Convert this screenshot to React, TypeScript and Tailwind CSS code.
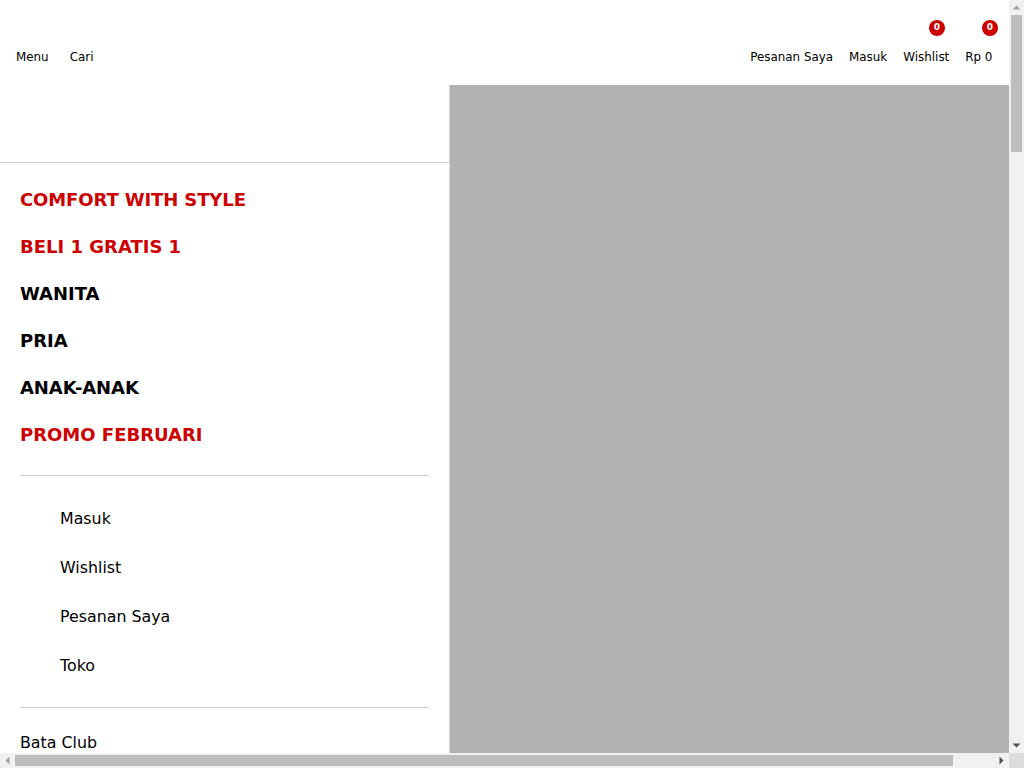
export default function App() {
  const font = { fontFamily: '"DejaVu Sans", sans-serif' };
  return (
    <div className="w-[1024px] h-[768px] overflow-hidden flex flex-col bg-white text-black" style={font}>
      <div className="flex h-[753px]">
        <div className="w-[1009px] flex flex-col overflow-hidden">
          <header className="h-[85px] shrink-0 flex flex-col">
            <div className="h-[20px]" />
            <div className="h-[16px] flex justify-end">
              <span className="mr-[37px] w-[16px] h-[16px] rounded-full bg-[#cc0000] text-white text-[9px] font-bold flex items-center justify-center">0</span>
              <span className="mr-[11px] w-[16px] h-[16px] rounded-full bg-[#cc0000] text-white text-[9px] font-bold flex items-center justify-center">0</span>
            </div>
            <div className="flex justify-between text-[11.9px] leading-[14px] mt-[14px] pl-[16px] pr-[16.6px]">
              <div className="flex gap-[21px]"><span>Menu</span><span>Cari</span></div>
              <div className="flex gap-[16px]"><span>Pesanan Saya</span><span>Masuk</span><span>Wishlist</span><span>Rp 0</span></div>
            </div>
          </header>
          <div className="flex flex-1 min-h-0">
            <nav className="w-[450px] shrink-0 bg-white overflow-hidden border-r border-[#d8d8d8]">
              <div className="h-[78px] border-b border-[#cccccc]" />
              <div className="px-[20px]">
                <ul className="pt-[13px] pb-[17px] text-[18px] leading-[47px] font-bold">
                  <li className="text-[#cc0000] tracking-[-0.11px]">COMFORT WITH STYLE</li>
                  <li className="text-[#cc0000]">BELI 1 GRATIS 1</li>
                  <li>WANITA</li>
                  <li>PRIA</li>
                  <li className="tracking-[-0.1px]">ANAK-ANAK</li>
                  <li className="text-[#cc0000]">PROMO FEBRUARI</li>
                </ul>
                <ul className="border-t border-b border-[#cccccc] pl-[40px] pt-[18px] pb-[17px] text-[15.84px] leading-[49px]">
                  <li>Masuk</li>
                  <li>Wishlist</li>
                  <li>Pesanan Saya</li>
                  <li>Toko</li>
                </ul>
                <div className="text-[15.84px] leading-[20px] mt-[25px]">Bata Club</div>
              </div>
            </nav>
            <div className="flex-1 bg-[#b2b2b2]" />
          </div>
        </div>
        <div className="w-[15px] bg-[#f1f1f1] flex flex-col items-center">
          <div className="h-[15px] w-full flex items-center justify-center">
            <svg width="9" height="5" viewBox="0 0 9 5"><path d="M4.5 0.5 L8.5 4.5 H0.5 Z" fill="#a3a3a3" /></svg>
          </div>
          <div className="w-[11px] h-[137px] bg-[#bdbdbd]" />
          <div className="flex-1" />
          <div className="h-[15px] w-full flex items-center justify-center">
            <svg width="9" height="5" viewBox="0 0 9 5"><path d="M0.5 0.5 H8.5 L4.5 4.5 Z" fill="#505050" /></svg>
          </div>
        </div>
      </div>
      <div className="flex h-[15px]">
        <div className="w-[1009px] bg-[#f1f1f1] flex items-center">
          <div className="w-[15px] h-full flex items-center justify-center">
            <svg width="5" height="9" viewBox="0 0 5 9"><path d="M4.5 0.5 V8.5 L0.5 4.5 Z" fill="#a3a3a3" /></svg>
          </div>
          <div className="w-[938px] h-[11px] bg-[#bdbdbd]" />
          <div className="flex-1" />
          <div className="w-[15px] h-full flex items-center justify-center">
            <svg width="5" height="9" viewBox="0 0 5 9"><path d="M0.5 0.5 L4.5 4.5 L0.5 8.5 Z" fill="#505050" /></svg>
          </div>
        </div>
        <div className="w-[15px] bg-[#dcdcdc]" />
      </div>
    </div>
  );
}
